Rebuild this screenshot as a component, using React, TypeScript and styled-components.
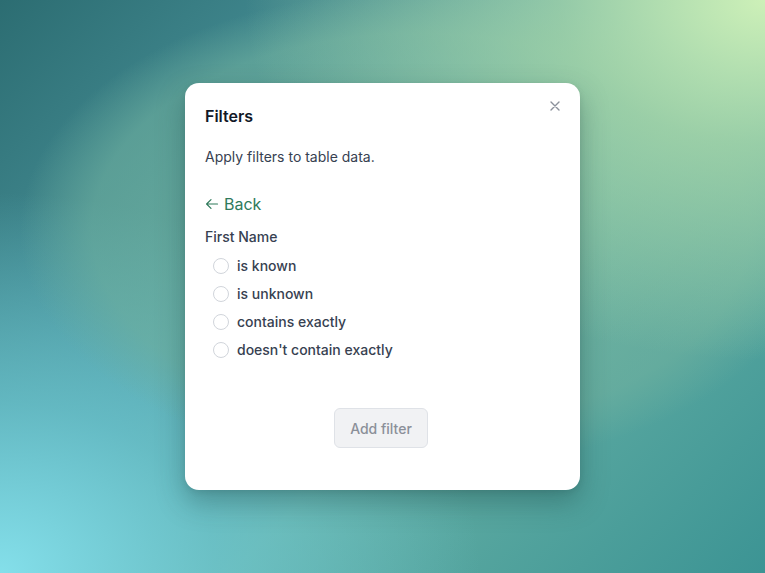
import React from "react";
import styled, { createGlobalStyle } from "styled-components";

const Global = createGlobalStyle`
  html, body { margin: 0; padding: 0; height: 100%; }
  body { font-family: Inter, "Noto Sans", "Liberation Sans", sans-serif; }
  #root { height: 100%; }
  * { box-sizing: border-box; }
`;

const Backdrop = styled.div`
  width: 765px;
  height: 573px;
  display: flex;
  align-items: center;
  justify-content: center;
  background:
    radial-gradient(ellipse 520px 360px at 765px 0px, #cdf0b8 0%, rgba(175, 220, 170, 0.7) 40%, rgba(140, 200, 165, 0) 100%),
    radial-gradient(ellipse 400px 240px at 420px 230px, rgba(115, 180, 158, 0.75) 0%, rgba(110, 176, 158, 0.6) 82%, rgba(110, 176, 158, 0) 100%),
    radial-gradient(ellipse 480px 380px at 0px 573px, #84dfea 0%, rgba(110, 200, 210, 0.7) 45%, rgba(100, 180, 190, 0) 100%),
    linear-gradient(135deg, #2c6d72 0%, #4f9aa2 40%, #66b0a5 60%, #3c9494 100%);
`;

const Card = styled.div`
  position: relative;
  width: 395px;
  height: 407px;
  background: #ffffff;
  border-radius: 14px;
  box-shadow: 0 12px 28px rgba(20, 60, 60, 0.35), 0 2px 6px rgba(0, 0, 0, 0.08);
  padding: 21px 20px 0 20px;
  display: flex;
  flex-direction: column;
`;

const Title = styled.h2`
  margin: 0;
  font-size: 16px;
  line-height: 24px;
  font-weight: 600;
  color: #111827;
`;

const Description = styled.p`
  margin: 19px 0 0;
  font-size: 14px;
  line-height: 20px;
  color: #374151;
`;

const BackLink = styled.button`
  margin: 25px 0 0;
  padding: 0;
  border: none;
  background: none;
  display: flex;
  align-items: center;
  gap: 5px;
  font-family: inherit;
  font-size: 16px;
  line-height: 24px;
  color: #2f7a5b;
  cursor: pointer;
  align-self: flex-start;
`;

const FieldLabel = styled.div`
  margin-top: 11px;
  font-size: 14px;
  line-height: 20px;
  font-weight: 500;
  color: #374151;
`;

const OptionList = styled.div`
  margin-top: 5px;
  display: flex;
  flex-direction: column;
`;

const Option = styled.label`
  height: 28px;
  display: flex;
  align-items: center;
  gap: 8px;
  padding-left: 8px;
  font-size: 14px;
  line-height: 20px;
  font-weight: 500;
  color: #374151;
`;

const Radio = styled.span`
  width: 16px;
  height: 16px;
  border-radius: 50%;
  border: 1px solid #d1d5db;
  background: #fff;
  flex-shrink: 0;
`;

const Footer = styled.div`
  margin-top: 44px;
  display: flex;
  justify-content: center;
  padding-right: 3px;
`;

const AddButton = styled.button`
  width: 94px;
  height: 40px;
  border-radius: 6px;
  border: 1px solid #dfe2e7;
  background: #f1f2f4;
  color: #8b9099;
  font-family: inherit;
  font-size: 14px;
  font-weight: 500;
`;

const CloseButton = styled.button`
  position: absolute;
  top: 15px;
  right: 17px;
  width: 16px;
  height: 16px;
  padding: 0;
  border: none;
  background: none;
  display: flex;
  align-items: center;
  justify-content: center;
  color: #8b919b;
`;

const options = ["is known", "is unknown", "contains exactly", "doesn't contain exactly"];

export default function App() {
  return (
    <>
      <Global />
      <Backdrop>
        <Card>
          <CloseButton aria-label="Close">
            <svg width="10" height="10" viewBox="0 0 10 10" fill="none">
              <path d="M1 1L9 9M9 1L1 9" stroke="currentColor" strokeWidth="1.4" strokeLinecap="round" />
            </svg>
          </CloseButton>
          <Title>Filters</Title>
          <Description>Apply filters to table data.</Description>
          <BackLink>
            <svg width="14" height="14" viewBox="0 0 14 14" fill="none">
              <path d="M12.5 7H1.8M6 2.6L1.6 7L6 11.4" stroke="currentColor" strokeWidth="1.2" strokeLinecap="round" strokeLinejoin="round" />
            </svg>
            Back
          </BackLink>
          <FieldLabel>First Name</FieldLabel>
          <OptionList>
            {options.map((o) => (
              <Option key={o}>
                <Radio />
                {o}
              </Option>
            ))}
          </OptionList>
          <Footer>
            <AddButton>Add filter</AddButton>
          </Footer>
        </Card>
      </Backdrop>
    </>
  );
}
